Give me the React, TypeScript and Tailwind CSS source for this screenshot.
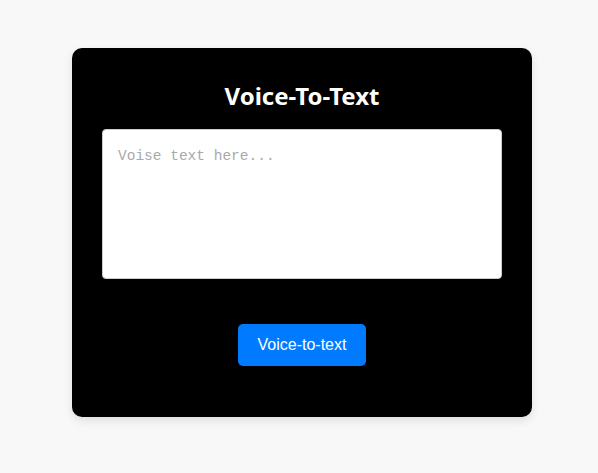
export default function App() {
  return (
    <div className="flex min-h-screen w-full justify-center bg-[#f8f8f8] pt-12 pl-[6px]">
      <div className="h-fit w-[460px] rounded-[10px] bg-black px-[30px] pt-[30px] pb-[51px] shadow-[0_4px_10px_rgba(0,0,0,0.1)]">
        <h2 className="text-center text-[24px] leading-9 font-bold text-white [font-family:'Noto_Sans',sans-serif]">
          Voice-To-Text
        </h2>
        <textarea
          placeholder="Voise text here..."
          className="mt-[15px] block h-[150px] w-full resize-none rounded border border-[#ccc] bg-white px-[15px] pt-[16px] pb-[15px] text-[14.5px] leading-5 text-black placeholder:text-[#a9a9a9] [font-family:'Liberation_Mono',monospace] outline-none"
        />
        <div className="mt-[45px] flex justify-center">
          <button className="h-[42px] w-[128px] rounded-[5px] bg-[#007bff] text-[16px] text-white [font-family:'Liberation_Sans',Arial,sans-serif]">
            Voice-to-text
          </button>
        </div>
      </div>
    </div>
  )
}
